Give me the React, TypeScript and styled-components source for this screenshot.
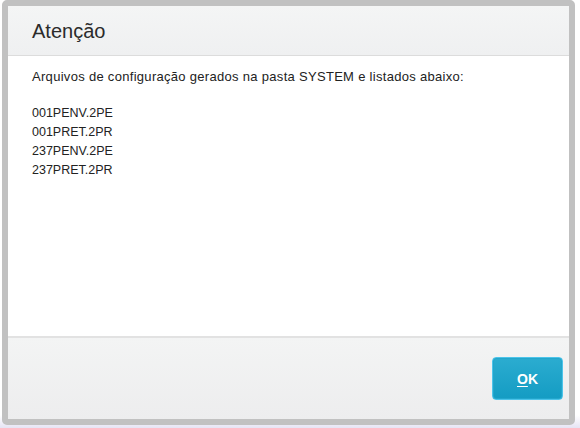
import React from 'react';
import styled, { createGlobalStyle } from 'styled-components';

const GlobalStyle = createGlobalStyle`
  html, body {
    margin: 0;
    padding: 0;
    background: #ffffff;
  }
  body {
    width: 580px;
    height: 428px;
    overflow: hidden;
    font-family: "Liberation Sans", Arial, sans-serif;
  }
`;

const Backdrop = styled.div`
  width: 580px;
  height: 428px;
  padding: 0 5px 3px 2px;
  box-sizing: border-box;
  background: linear-gradient(180deg, #ffffff 0%, #ffffff 97%, #e6e4f4 100%);
`;

const Dialog = styled.div`
  height: 425px;
  box-sizing: border-box;
  border: 6px solid #c1c1c1;
  border-radius: 5px;
  background: #ffffff;
  display: flex;
  flex-direction: column;
  overflow: hidden;
`;

const Header = styled.div`
  height: 50px;
  flex-shrink: 0;
  box-sizing: border-box;
  display: flex;
  align-items: center;
  padding: 1px 0 0 24px;
  background: linear-gradient(180deg, #f4f5f5 0%, #eff0f1 100%);
  border-bottom: 1px solid #dcdcdc;
`;

const Title = styled.h1`
  margin: 0;
  font-size: 20px;
  font-weight: 400;
  color: #2b2b2b;
`;

const Body = styled.div`
  flex: 1;
  padding: 12px 24px 0 24px;
  font-size: 13px;
  color: #222222;
`;

const Message = styled.p`
  margin: 0;
  line-height: 17px;
  letter-spacing: 0.3px;
`;

const FileList = styled.ul`
  list-style: none;
  margin: 19px 0 0 0;
  padding: 0;
  font-size: 12.5px;
  line-height: 19px;
`;

const Footer = styled.div`
  height: 83px;
  flex-shrink: 0;
  box-sizing: border-box;
  border-top: 2px solid #e2e2e2;
  background: linear-gradient(180deg, #f3f4f4 0%, #ededee 100%);
  display: flex;
  justify-content: flex-end;
  align-items: flex-start;
  padding: 19px 6px 0 0;
`;

const OkButton = styled.button`
  width: 71px;
  height: 43px;
  box-sizing: border-box;
  border: 1px solid #4cc4ea;
  border-radius: 4px;
  background: linear-gradient(180deg, #2bacd0 0%, #149cc3 100%);
  box-shadow: inset 0 0 0 1px #23a6cc;
  color: #ffffff;
  font-family: "Liberation Sans", Arial, sans-serif;
  font-size: 14px;
  font-weight: 700;
  cursor: pointer;
  padding: 0;

  u {
    text-decoration: underline;
    text-underline-offset: 2px;
  }
`;

const files = ['001PENV.2PE', '001PRET.2PR', '237PENV.2PE', '237PRET.2PR'];

const App: React.FC = () => (
  <>
    <GlobalStyle />
    <Backdrop>
      <Dialog>
        <Header>
          <Title>Atenção</Title>
        </Header>
        <Body>
          <Message>Arquivos de configuração gerados na pasta SYSTEM e listados abaixo:</Message>
          <FileList>
            {files.map((f) => (
              <li key={f}>{f}</li>
            ))}
          </FileList>
        </Body>
        <Footer>
          <OkButton>
            <u>O</u>K
          </OkButton>
        </Footer>
      </Dialog>
    </Backdrop>
  </>
);

export default App;
